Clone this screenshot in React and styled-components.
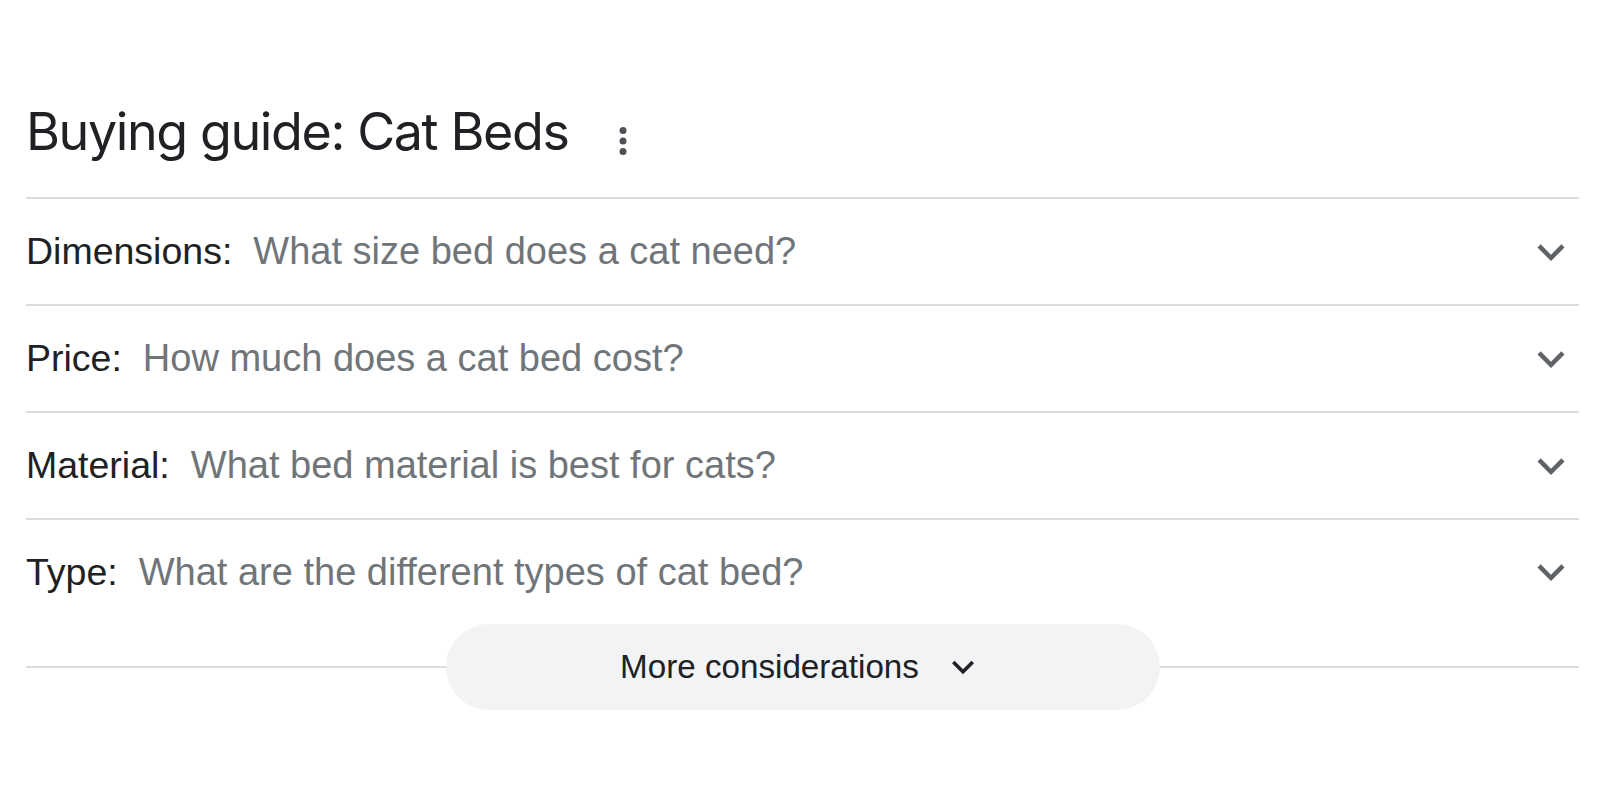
import React from "react";
import styled, { createGlobalStyle } from "styled-components";

const Global = createGlobalStyle`
  html, body { margin: 0; padding: 0; background: #ffffff; }
  body { font-family: "Liberation Sans", Arial, sans-serif; }
  * { box-sizing: border-box; }
`;

const Page = styled.div`
  width: 1600px;
  padding: 0 21px 0 26px;
`;

const Header = styled.div`
  height: 199px;
  display: flex;
  align-items: flex-end;
  padding-bottom: 39px;
  border-bottom: 2px solid #dadce0;
`;

const Heading = styled.h2`
  margin: 0;
  font-family: Inter, "Liberation Sans", sans-serif;
  font-weight: 400;
  font-size: 52px;
  line-height: 52px;
  color: #202124;
  letter-spacing: -1.4px;
`;

const MenuButton = styled.span`
  display: flex;
  width: 42px;
  height: 42px;
  margin-left: 34px;
  margin-bottom: -4px;
  color: #4d5156;
`;

const Row = styled.div`
  height: ${(p) => (p.$last ? "104px" : "107px")};
  display: flex;
  align-items: center;
  justify-content: space-between;
  border-bottom: ${(p) => (p.$last ? "none" : "2px solid #dadce0")};
`;

const RowText = styled.div`
  font-size: 37.5px;
  white-space: nowrap;
`;

const Label = styled.span`
  color: #202124;
`;

const Question = styled.span`
  color: #70757a;
  font-size: 38px;
  margin-left: 21px;
`;

const Chevron = styled.span`
  display: flex;
  width: 54px;
  height: 54px;
  margin-right: 1px;
  color: #5f6368;
`;

const MoreBar = styled.div`
  display: flex;
  align-items: center;
  height: 86px;
`;

const Rule = styled.div`
  flex: 1;
  height: 2px;
  background: #dadce0;
`;

const MoreButton = styled.button`
  width: 714px;
  height: 86px;
  border: none;
  border-radius: 43px;
  background: #f1f3f4;
  display: flex;
  align-items: center;
  justify-content: center;
  gap: 22px;
  padding: 0;
  font-family: "Liberation Sans", Arial, sans-serif;
  font-size: 33.2px;
  color: #202124;
  cursor: pointer;
`;

const SmallChevron = styled.span`
  display: flex;
  width: 44px;
  height: 44px;
  color: #202124;
`;

const ExpandMore = () => (
  <svg viewBox="0 0 24 24" width="100%" height="100%" fill="currentColor">
    <path d="M16.59 8.59L12 13.17 7.41 8.59 6 10l6 6 6-6z" />
  </svg>
);

const MoreVert = () => (
  <svg viewBox="0 0 24 24" width="100%" height="100%" fill="currentColor">
    <circle cx="12" cy="6" r="2" />
    <circle cx="12" cy="12" r="2" />
    <circle cx="12" cy="18" r="2" />
  </svg>
);

const items = [
  { label: "Dimensions:", q: "What size bed does a cat need?" },
  { label: "Price:", q: "How much does a cat bed cost?" },
  { label: "Material:", q: "What bed material is best for cats?" },
  { label: "Type:", q: "What are the different types of cat bed?" },
];

export default function App() {
  return (
    <>
      <Global />
      <Page>
        <Header>
          <Heading>Buying guide: Cat Beds</Heading>
          <MenuButton>
            <MoreVert />
          </MenuButton>
        </Header>
        {items.map((it, i) => (
          <Row key={it.label} $last={i === items.length - 1}>
            <RowText>
              <Label>{it.label}</Label>
              <Question>{it.q}</Question>
            </RowText>
            <Chevron>
              <ExpandMore />
            </Chevron>
          </Row>
        ))}
        <MoreBar>
          <Rule />
          <MoreButton>
            More considerations
            <SmallChevron>
              <ExpandMore />
            </SmallChevron>
          </MoreButton>
          <Rule />
        </MoreBar>
      </Page>
    </>
  );
}
